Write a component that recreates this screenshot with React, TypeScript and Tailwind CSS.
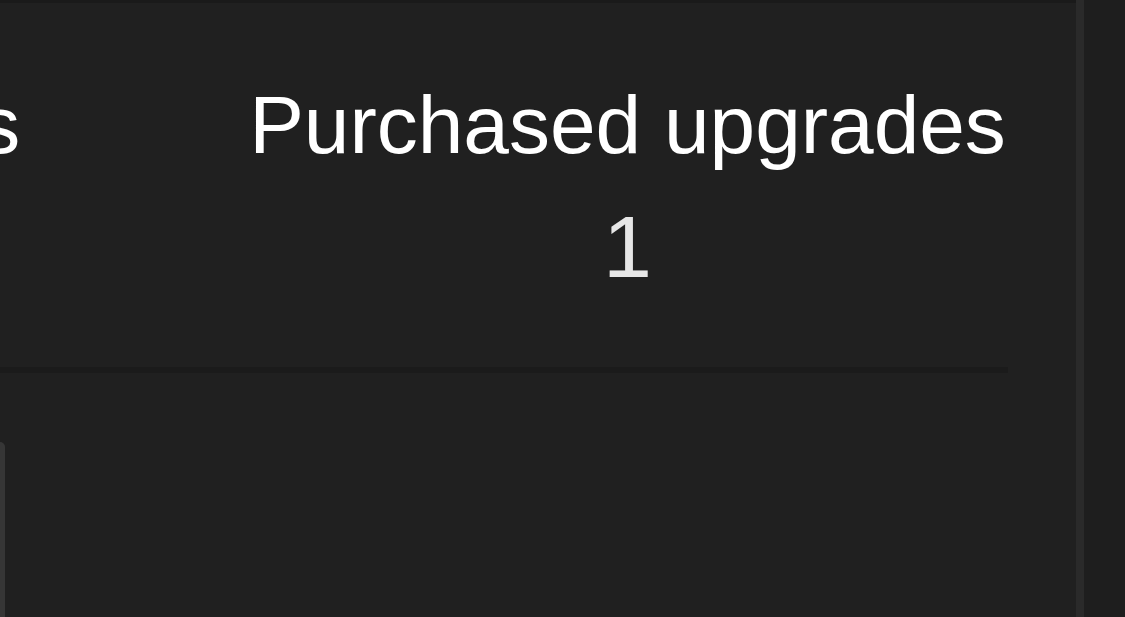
const stats = [
  { label: "Upgrades", value: "4" },
  { label: "Purchased upgrades", value: "1" },
];

export default function App() {
  return (
    <div
      className="flex h-screen w-full overflow-hidden bg-[#1f1f1f]"
      style={{ fontFamily: '"Liberation Sans", Arial, sans-serif' }}
    >
      <main className="flex w-[1076px] shrink-0 flex-col overflow-hidden border-t-[3px] border-[#1a1a1a] bg-[#202020]">
        {/* stat columns, the first one runs off the left edge */}
        <div className="flex justify-end gap-6 pr-[68px] pt-[81px]">
          {stats.map((s) => (
            <div key={s.label} className="flex w-[761px] shrink-0 flex-col items-center">
              <span className="whitespace-nowrap text-[82px] leading-[82px] text-white">{s.label}</span>
              <span className="mt-[37px] text-[88px] leading-[88px] text-[#e6e6e6]">{s.value}</span>
            </div>
          ))}
        </div>
        <div className="mt-[76px] h-[6px] w-[1008px] bg-[#1b1b1b]" />
        <div className="mt-[69px] flex-1">
          <div className="h-full w-[5px] rounded-tr-[5px] bg-[#363636]" />
        </div>
      </main>
      <div className="w-[8px] shrink-0 bg-[#2a2a2a]" />
      <aside className="flex-1 bg-[#1e1e1e]" />
    </div>
  );
}
